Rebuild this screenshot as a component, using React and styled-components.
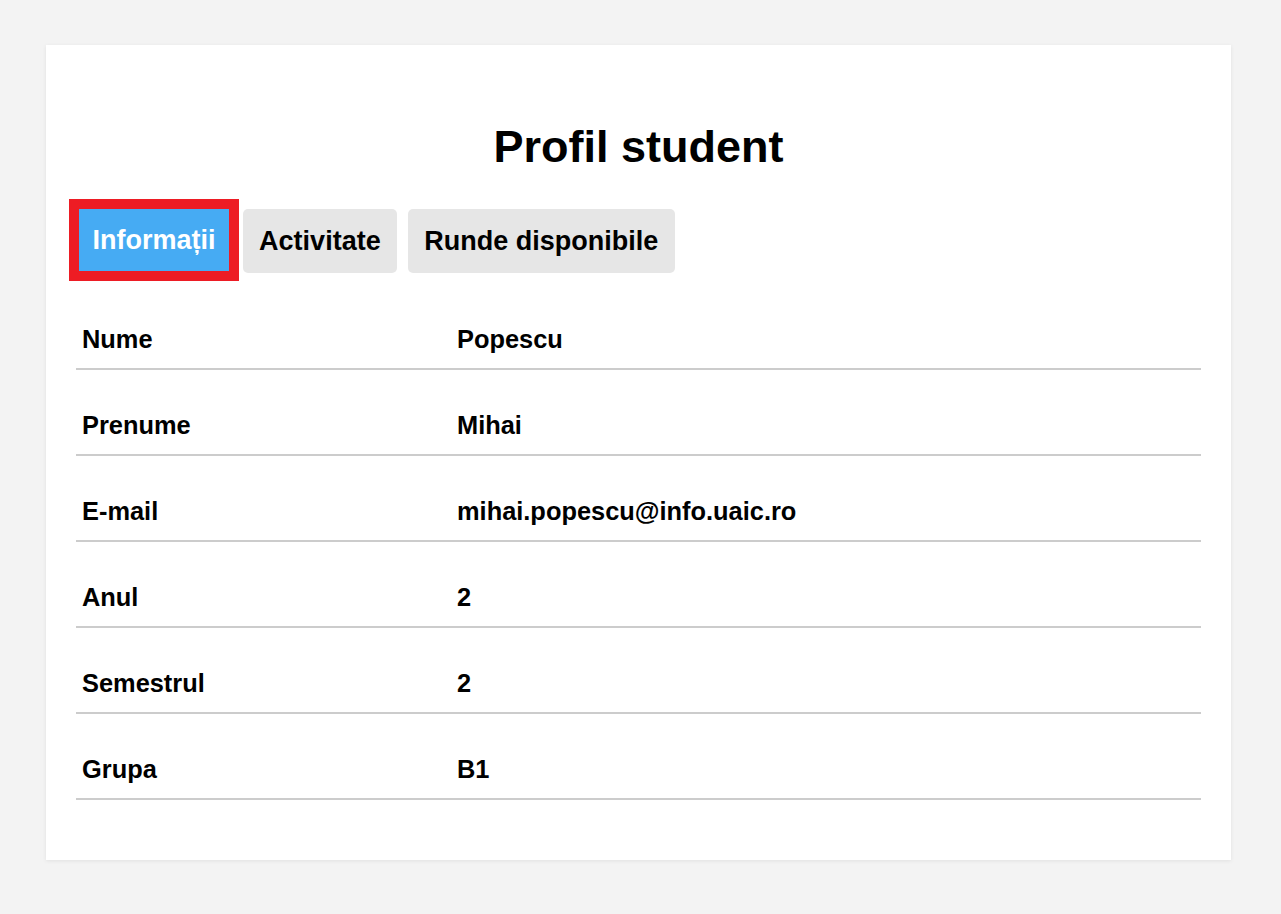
import React, { useState } from "react";
import styled, { createGlobalStyle } from "styled-components";

const GlobalStyle = createGlobalStyle`
  html, body {
    margin: 0;
    padding: 0;
    background: #f3f3f3;
    font-family: "Liberation Sans", Arial, sans-serif;
    color: #000;
  }
`;

const Page = styled.div`
  padding: 45px 50px 54px 46px;
`;

const Card = styled.main`
  background: #fff;
  padding: 30px 30px 60px;
  box-shadow: 0 1px 4px rgba(0, 0, 0, 0.08);
`;

const Title = styled.h1`
  margin: 46px 0 36px;
  text-align: center;
  font-size: 45px;
  line-height: 52px;
  font-weight: 700;
`;

const Tabs = styled.nav`
  display: flex;
  align-items: flex-start;
  gap: 11px;
  margin-bottom: 11px;
  padding-left: 3px;
`;

const Tab = styled.button`
  font-family: inherit;
  font-size: 27px;
  font-weight: 700;
  height: ${(p) => (p.$active ? "62px" : "64px")};
  padding: ${(p) => (p.$active ? "0 13.3px 0 13.5px" : "0 16.3px")};
  border: none;
  cursor: pointer;
  border-radius: ${(p) => (p.$active ? "0" : "5px")};
  background: ${(p) => (p.$active ? "#46abf3" : "#e6e6e6")};
  color: ${(p) => (p.$active ? "#fff" : "#000")};
  outline: ${(p) => (p.$active ? "10px solid #ed1c24" : "none")};
  margin-right: ${(p) => (p.$active ? "3px" : "0")};
`;

const Table = styled.div`
  display: flex;
  flex-direction: column;
`;

const Row = styled.div`
  display: grid;
  grid-template-columns: 1fr 2fr;
  padding: 41px 0 14px;
  border-bottom: 2px solid #cccccc;
`;

const Cell = styled.div`
  padding: 0 6px;
  font-size: 25.4px;
  line-height: 29px;
  font-weight: 700;
`;

const rows = [
  ["Nume", "Popescu"],
  ["Prenume", "Mihai"],
  ["E-mail", "mihai.popescu@info.uaic.ro"],
  ["Anul", "2"],
  ["Semestrul", "2"],
  ["Grupa", "B1"],
];

const tabs = ["Informații", "Activitate", "Runde disponibile"];

export default function App() {
  const [active, setActive] = useState(0);
  return (
    <>
      <GlobalStyle />
      <Page>
        <Card>
          <Title>Profil student</Title>
          <Tabs>
            {tabs.map((t, i) => (
              <Tab key={t} $active={i === active} onClick={() => setActive(i)}>
                {t}
              </Tab>
            ))}
          </Tabs>
          <Table>
            {rows.map(([k, v]) => (
              <Row key={k}>
                <Cell>{k}</Cell>
                <Cell>{v}</Cell>
              </Row>
            ))}
          </Table>
        </Card>
      </Page>
    </>
  );
}
